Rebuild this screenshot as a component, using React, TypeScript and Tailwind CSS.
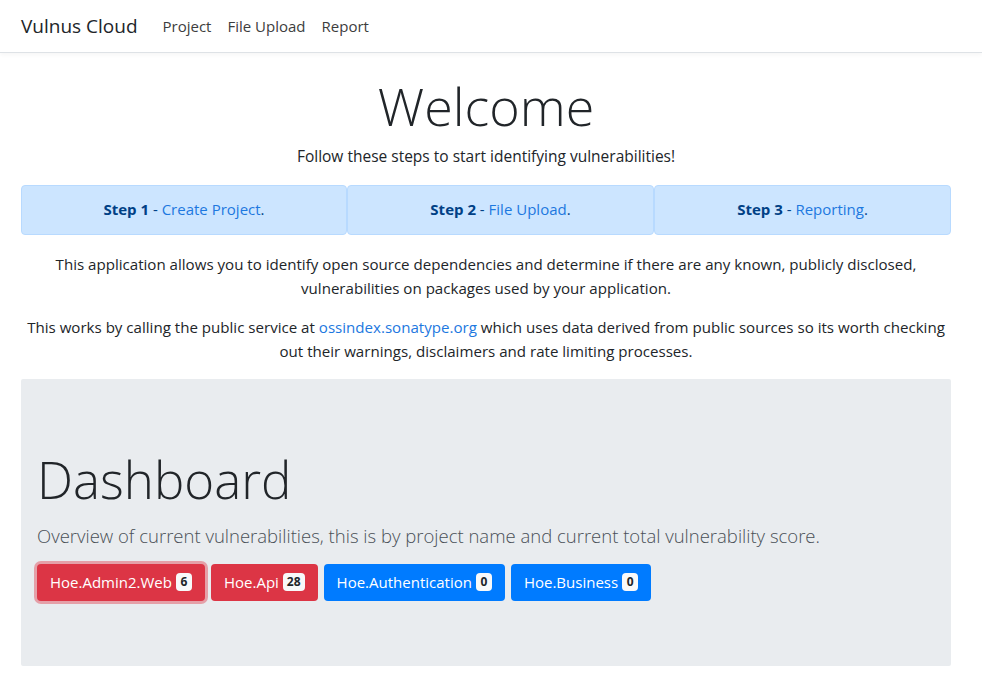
import React from "react";

const font = { fontFamily: '"Segoe UI", "Open Sans", "Noto Sans", sans-serif' };

function Badge({ n }: { n: number }) {
  return (
    <span className="ml-[4px] inline-flex h-[18px] min-w-[16px] items-center justify-center rounded-[4px] bg-[#f8f9fa] px-[4px] text-[12px] font-bold leading-none text-[#212529]">
      {n}
    </span>
  );
}

export default function App() {
  return (
    <div className="min-h-[689px] bg-white text-[#212529]" style={font}>
      <nav className="flex h-[53px] items-center border-b border-[#dee2e6] bg-white px-[21px] shadow-[0_2px_4px_rgba(0,0,0,0.04)]">
        <span className="mr-[25px] text-[19px] text-[#212529]">Vulnus Cloud</span>
        <span className="mr-[16px] text-[15px] text-[#3d3d3d]">Project</span>
        <span className="mr-[16px] text-[15px] text-[#3d3d3d]">File Upload</span>
        <span className="text-[15px] text-[#3d3d3d]">Report</span>
      </nav>
      <main className="ml-[21px] w-[930px] pt-[22px]">
        <h1 className="text-center text-[52px] font-light leading-[1.2] text-[#212529]">Welcome</h1>
        <p className="mt-[8px] text-center text-[15.5px]">Follow these steps to start identifying vulnerabilities!</p>
        <div className="mt-[16px] flex">
          <div className="flex h-[50px] w-[326px] items-center justify-center rounded-[4px] border border-[#b8daff] bg-[#cce5ff] text-[15px] text-[#004085]">
            <b>Step 1</b>&nbsp;-&nbsp;<span className="text-[#1d78e0]">Create Project</span>.
          </div>
          <div className="flex h-[50px] w-[307px] items-center justify-center rounded-[4px] border border-[#b8daff] bg-[#cce5ff] text-[15px] text-[#004085]">
            <b>Step 2</b>&nbsp;-&nbsp;<span className="text-[#1d78e0]">File Upload</span>.
          </div>
          <div className="flex h-[50px] w-[297px] items-center justify-center rounded-[4px] border border-[#b8daff] bg-[#cce5ff] text-[15px] text-[#004085]">
            <b>Step 3</b>&nbsp;-&nbsp;<span className="text-[#1d78e0]">Reporting</span>.
          </div>
        </div>
        <p className="mt-[17px] text-center text-[15.1px] leading-[24px]">
          This application allows you to identify open source dependencies and determine if there are any known, publicly disclosed,
          <br />
          vulnerabilities on packages used by your application.
        </p>
        <p className="mt-[15px] text-center text-[15.1px] leading-[24px]">
          This works by calling the public service at <span className="text-[#1d78e0]">ossindex.sonatype.org</span> which uses data derived from public sources so its worth checking
          <br />
          out their warnings, disclaimers and rate limiting processes.
        </p>
        <section className="mt-[16px] h-[287px] rounded-[2px] bg-[#e9ecef] px-[16px] pt-[70px]">
          <h2 className="text-[51px] font-light leading-[1.2] text-[#212529]">Dashboard</h2>
          <p className="mt-[12px] text-[18.5px] font-light text-[#495057]">
            Overview of current vulnerabilities, this is by project name and current total vulnerability score.
          </p>
          <div className="mt-[14px] flex gap-[6px]">
            <span className="flex h-[37px] items-center rounded-[4px] bg-[#dc3545] px-[13px] text-[15px] text-white shadow-[0_0_0_3px_rgba(225,83,97,0.5)]">
              Hoe.Admin2.Web<Badge n={6} />
            </span>
            <span className="flex h-[37px] items-center rounded-[4px] bg-[#dc3545] px-[13px] text-[15px] text-white">
              Hoe.Api<Badge n={28} />
            </span>
            <span className="flex h-[37px] items-center rounded-[4px] bg-[#007bff] px-[13px] text-[15px] text-white">
              Hoe.Authentication<Badge n={0} />
            </span>
            <span className="flex h-[37px] items-center rounded-[4px] bg-[#007bff] px-[13px] text-[15px] text-white">
              Hoe.Business<Badge n={0} />
            </span>
          </div>
        </section>
      </main>
    </div>
  );
}
